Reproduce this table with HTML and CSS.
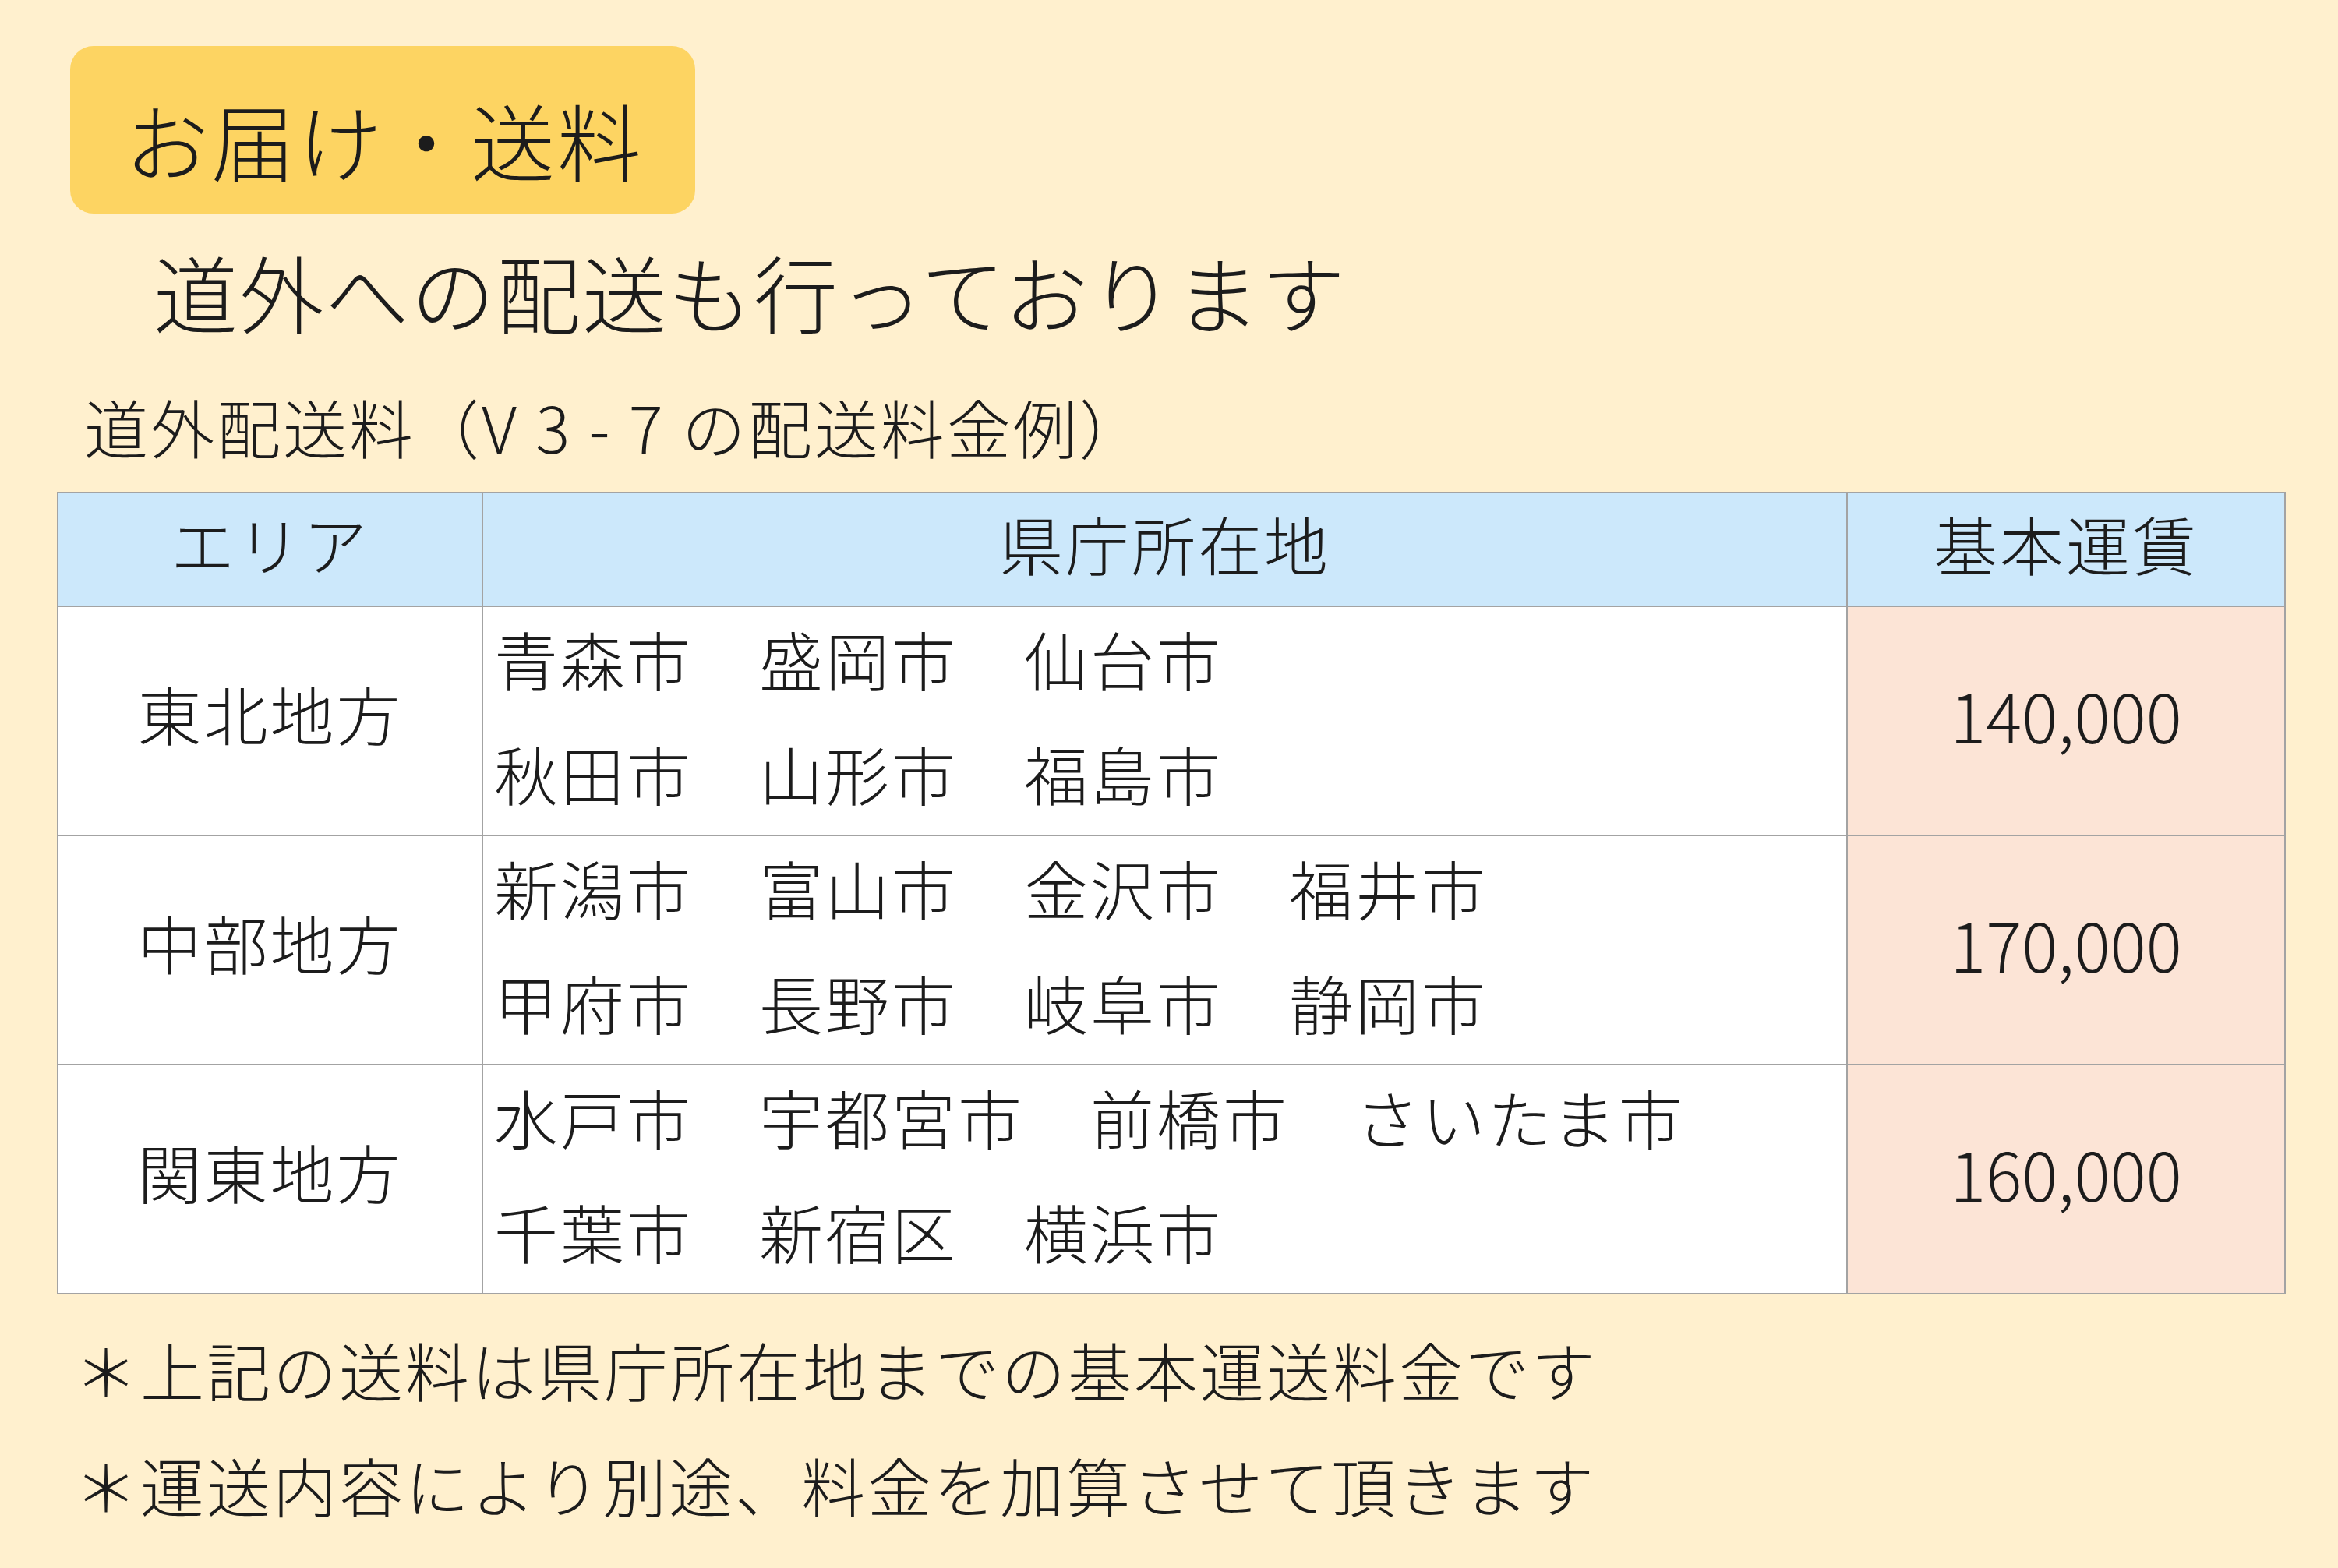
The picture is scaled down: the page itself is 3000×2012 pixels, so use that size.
FILE: index.html
```html
<!DOCTYPE html>
<html lang="ja">
<head>
<meta charset="utf-8">
<title>お届け・送料</title>
<link rel="stylesheet" href="styles.css">
</head>
<body>
<main class="page">
  <div class="badge">お届け・送料</div>
  <h2 class="lead">道外への配送も行っております</h2>
  <p class="caption">道外配送料（V 3 - 7 の配送料金例）</p>
  <table class="rates">
    <colgroup>
      <col class="c-area">
      <col class="c-city">
      <col class="c-price">
    </colgroup>
    <thead>
      <tr><th>エリア</th><th>県庁所在地</th><th>基本運賃</th></tr>
    </thead>
    <tbody>
      <tr>
        <td class="area">東北地方</td>
        <td class="cities"><div class="line">青森市　盛岡市　仙台市</div><div class="line">秋田市　山形市　福島市</div></td>
        <td class="price">140,000</td>
      </tr>
      <tr>
        <td class="area">中部地方</td>
        <td class="cities"><div class="line">新潟市　富山市　金沢市　福井市</div><div class="line">甲府市　長野市　岐阜市　静岡市</div></td>
        <td class="price">170,000</td>
      </tr>
      <tr>
        <td class="area">関東地方</td>
        <td class="cities"><div class="line">水戸市　宇都宮市　前橋市　さいたま市</div><div class="line">千葉市　新宿区　横浜市</div></td>
        <td class="price">160,000</td>
      </tr>
    </tbody>
  </table>
  <div class="notes">
    <p class="note">＊上記の送料は県庁所在地までの基本運送料金です</p>
    <p class="note">＊運送内容により別途、料金を加算させて頂きます</p>
  </div>
</main>
</body>
</html>
```

FILE: styles.css
```css
html, body {
  margin: 0;
  padding: 0;
}
body {
  background: #FFF0CE;
  color: #1c1c1c;
  font-family: "Noto Sans CJK JP", "Noto Sans", sans-serif;
  font-weight: 300;
  width: 3000px;
  height: 2012px;
  overflow: hidden;
}
.page {
  display: flex;
  flex-direction: column;
  align-items: flex-start;
  padding-top: 59px;
}
.badge {
  margin-left: 90px;
  width: 802px;
  height: 215px;
  box-sizing: border-box;
  padding: 32px 0 0 70px;
  background: #FDD462;
  border-radius: 30px;
  font-size: 108px;
  line-height: 175px;
  letter-spacing: 3px;
}
.lead {
  margin: 34px 0 0 0;
  padding-left: 197px;
  font-size: 108px;
  font-weight: 300;
  line-height: 130px;
  letter-spacing: 2px;
}
.caption {
  margin: 54px 0 0 0;
  padding-left: 108px;
  font-size: 82px;
  line-height: 110px;
  letter-spacing: 3px;
}
.rates {
  margin: 29px 0 0 73px;
  width: 2858px;
  border-collapse: collapse;
  table-layout: fixed;
  font-size: 82px;
  letter-spacing: 3px;
}
.c-area { width: 545px; }
.c-city { width: 1751px; }
.c-price { width: 562px; }
.rates thead tr { height: 146px; }
.rates tbody tr { height: 294px; }
.rates th,
.rates td {
  border: 2px solid #A3A3A3;
  padding: 0;
  font-weight: 300;
}
.rates th {
  background: #CCE8FB;
  text-align: center;
  line-height: 100px;
  padding-bottom: 16px;
}
.rates td {
  background: #FFFFFF;
}
.rates td.area {
  text-align: center;
  padding-bottom: 22px;
}
.rates td.cities {
  vertical-align: top;
  padding-left: 14px;
}
.line {
  line-height: 147px;
  white-space: nowrap;
}
.line:first-child {
  margin-top: -8px;
}
.rates td.price {
  background: #FCE4D6;
  text-align: center;
  font-size: 86px;
  letter-spacing: 0;
  padding-bottom: 18px;
}
.notes {
  margin-top: 22px;
  padding-left: 95px;
}
.note {
  margin: 0;
  font-size: 82px;
  line-height: 148px;
  letter-spacing: 3px;
}
```
